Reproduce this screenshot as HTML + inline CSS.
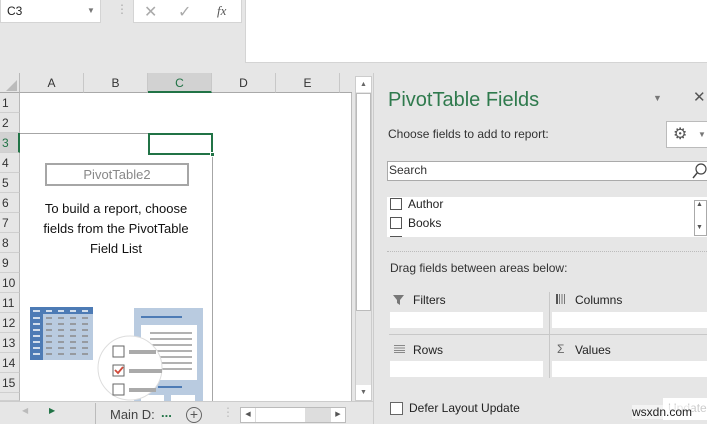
<!DOCTYPE html>
<html><head><style>
*{margin:0;padding:0;box-sizing:border-box}
body{width:707px;height:424px;overflow:hidden;background:#e6e6e6;font-family:"Liberation Sans",sans-serif;position:relative;font-size:12px;color:#222}
.a{position:absolute}
.rh{position:absolute;left:0;width:20px;height:20px;background:#e6e6e6;border-bottom:1px solid #cfcfcf;border-right:1px solid #b8b8b8;font-size:12px;text-align:left;padding-left:2px;line-height:20px;color:#333}
.ch{position:absolute;top:73px;height:20px;background:#e6e6e6;border-right:1px solid #c8c8c8;border-bottom:1px solid #a9a9a9;text-align:center;line-height:20px;font-size:12px;color:#333}
.cb{position:absolute;width:12px;height:12px;border:1px solid #555;background:#fff}
.wbox{position:absolute;background:#fff;height:16px}
</style></head><body>
<div class="a" style="left:0;top:0;width:101px;height:23px;background:#fff;border:1px solid #d4d4d4;border-top:none"></div>
<div class="a" style="left:7px;top:4px;font-size:12px">C3</div>
<div class="a" style="left:87px;top:6px;font-size:8px;color:#777">▼</div>
<div class="a" style="left:116px;top:2px;color:#aaa;font-size:12px">⋮</div>
<div class="a" style="left:133px;top:0;width:109px;height:23px;background:#fff;border:1px solid #d4d4d4;border-top:none"></div>
<div class="a" style="left:144px;top:2px;color:#aaa;font-size:16px">✕</div>
<div class="a" style="left:178px;top:2px;color:#aaa;font-size:16px">✓</div>
<div class="a" style="left:217px;top:3px;color:#555;font-size:13px;font-style:italic;font-family:'Liberation Serif',serif">fx</div>
<div class="a" style="left:245px;top:0;width:462px;height:63px;background:#fff;border-left:1px solid #d4d4d4;border-bottom:1px solid #d4d4d4"></div>
<div class="a" style="left:0;top:73px;width:20px;height:20px;background:#e6e6e6;border-right:1px solid #b8b8b8;border-bottom:1px solid #a9a9a9"></div>
<div class="a" style="left:6px;top:80px;width:0;height:0;border-left:11px solid transparent;border-bottom:11px solid #bbb"></div>
<div class="ch" style="left:20px;width:64px">A</div>
<div class="ch" style="left:84px;width:64px">B</div>
<div class="ch" style="left:148px;width:64px;background:#d2d2d2;border-bottom:2px solid #217346;color:#217346">C</div>
<div class="ch" style="left:212px;width:64px">D</div>
<div class="ch" style="left:276px;width:64px">E</div>
<div class="ch" style="left:340px;width:12px;border-right:none"></div>
<div class="a" style="left:20px;top:93px;width:332px;height:308px;background:#fff;border-right:1px solid #bbb"></div>
<div class="rh" style="top:93px">1</div>
<div class="rh" style="top:113px">2</div>
<div class="rh" style="top:133px;background:#d2d2d2;border-right:2px solid #217346;color:#217346">3</div>
<div class="rh" style="top:153px">4</div>
<div class="rh" style="top:173px">5</div>
<div class="rh" style="top:193px">6</div>
<div class="rh" style="top:213px">7</div>
<div class="rh" style="top:233px">8</div>
<div class="rh" style="top:253px">9</div>
<div class="rh" style="top:273px">10</div>
<div class="rh" style="top:293px">11</div>
<div class="rh" style="top:313px">12</div>
<div class="rh" style="top:333px">13</div>
<div class="rh" style="top:353px">14</div>
<div class="rh" style="top:373px">15</div>
<div class="rh" style="top:393px;height:8px"></div>
<div class="a" style="left:20px;top:133px;width:193px;height:270px;border:1px solid #a6a6a6;border-left:none"></div>
<div class="a" style="left:148px;top:133px;width:65px;height:22px;border:2px solid #217346"></div>
<div class="a" style="left:210px;top:152px;width:5px;height:5px;background:#217346;border:1px solid #fff"></div>
<div class="a" style="left:45px;top:163px;width:144px;height:23px;border:2px solid #a6a6a6;text-align:center;line-height:19px;color:#888;font-size:13px">PivotTable2</div>
<div class="a" style="left:32px;top:199px;width:168px;text-align:center;font-size:13px;line-height:20px;color:#111">To build a report, choose fields from the PivotTable Field List</div>
<svg class="a" style="left:28px;top:305px" width="180" height="96">
<rect x="2" y="2" width="63" height="53" fill="#b9cbe0"/>
<rect x="2" y="2" width="13" height="53" fill="#4d7bb5"/>
<rect x="2" y="2" width="63" height="7" fill="#4d7bb5"/>
<g stroke="#fff" stroke-width="1.5"><line x1="5" y1="6" x2="12" y2="6"/><line x1="18" y1="6" x2="24" y2="6"/><line x1="30" y1="6" x2="36" y2="6"/><line x1="42" y1="6" x2="48" y2="6"/><line x1="54" y1="6" x2="60" y2="6"/>
<line x1="5" y1="13" x2="12" y2="13"/><line x1="5" y1="19" x2="12" y2="19"/><line x1="5" y1="25" x2="12" y2="25"/><line x1="5" y1="31" x2="12" y2="31"/><line x1="5" y1="37" x2="12" y2="37"/><line x1="5" y1="43" x2="12" y2="43"/><line x1="5" y1="49" x2="12" y2="49"/></g>
<g stroke="#8a8a8a" stroke-width="1.5" stroke-dasharray="6 6"><line x1="18" y1="13" x2="64" y2="13"/><line x1="18" y1="19" x2="64" y2="19"/><line x1="18" y1="25" x2="64" y2="25"/><line x1="18" y1="31" x2="64" y2="31"/><line x1="18" y1="37" x2="64" y2="37"/><line x1="18" y1="43" x2="64" y2="43"/><line x1="18" y1="49" x2="64" y2="49"/></g>
<rect x="106" y="3" width="69" height="93" fill="#b9cbe0"/>
<line x1="113" y1="12" x2="154" y2="12" stroke="#4d7bb5" stroke-width="2"/>
<rect x="113" y="20" width="56" height="55" fill="#fff"/>
<g stroke="#999" stroke-width="1.5"><line x1="122" y1="28" x2="164" y2="28"/><line x1="122" y1="34" x2="164" y2="34"/><line x1="122" y1="40" x2="164" y2="40"/><line x1="122" y1="46" x2="164" y2="46"/><line x1="122" y1="52" x2="164" y2="52"/><line x1="122" y1="58" x2="164" y2="58"/><line x1="122" y1="64" x2="164" y2="64"/></g>
<line x1="130" y1="82" x2="154" y2="82" stroke="#4d7bb5" stroke-width="2"/>
<rect x="113" y="90" width="23" height="6" fill="#fff"/><rect x="143" y="90" width="24" height="6" fill="#fff"/>
<circle cx="102" cy="63" r="32" fill="#fff" stroke="#ddd"/>
<rect x="85" y="41" width="11" height="11" fill="#fff" stroke="#666"/>
<rect x="85" y="60" width="11" height="11" fill="#fff" stroke="#666"/>
<rect x="85" y="79" width="11" height="11" fill="#fff" stroke="#666"/>
<path d="M87 65 l3 3 l5 -6" stroke="#d04a3a" stroke-width="1.8" fill="none"/>
<g stroke="#aaa" stroke-width="4"><line x1="101" y1="47" x2="128" y2="47"/><line x1="101" y1="66" x2="134" y2="66"/><line x1="101" y1="85" x2="128" y2="85"/></g>
</svg>
<div class="a" style="left:355px;top:76px;width:17px;height:325px;background:#e6e6e6;border:1px solid #ccc"></div>
<div class="a" style="left:356px;top:77px;width:15px;height:15px;background:#fff;font-size:7px;color:#666;text-align:center;line-height:15px">▲</div>
<div class="a" style="left:356px;top:93px;width:15px;height:218px;background:#fff;border:1px solid #bbb"></div>
<div class="a" style="left:356px;top:385px;width:15px;height:15px;background:#fff;font-size:7px;color:#666;text-align:center;line-height:15px">▼</div>
<div class="a" style="left:0;top:401px;width:373px;height:23px;background:#e6e6e6;border-top:1px solid #ccc"></div>
<div class="a" style="left:22px;top:406px;font-size:8px;color:#bbb">◀</div>
<div class="a" style="left:49px;top:406px;font-size:8px;color:#217346">▶</div>
<div class="a" style="left:95px;top:403px;width:1px;height:21px;background:#bbb"></div>
<div class="a" style="left:110px;top:407px;font-size:13px;color:#444">Main D:</div>
<div class="a" style="left:161px;top:405px;font-size:13px;color:#217346;font-weight:bold">...</div>
<div class="a" style="left:186px;top:407px;width:16px;height:16px;border:1px solid #666;border-radius:50%;text-align:center;line-height:13px;font-size:14px;color:#555">+</div>
<div class="a" style="left:222px;top:405px;color:#bbb;font-size:12px">⋮</div>
<div class="a" style="left:240px;top:407px;width:106px;height:16px;background:#ddd;border:1px solid #bbb"></div>
<div class="a" style="left:241px;top:408px;width:14px;height:14px;background:#fff;font-size:7px;line-height:14px;text-align:center;color:#555">◀</div>
<div class="a" style="left:256px;top:408px;width:49px;height:14px;background:#fff"></div>
<div class="a" style="left:331px;top:408px;width:14px;height:14px;background:#fff;font-size:7px;line-height:14px;text-align:center;color:#555">▶</div>
<div class="a" style="left:373px;top:73px;width:334px;height:351px;background:#e6e6e6;border-left:1px solid #ccc"></div>
<div class="a" style="left:388px;top:89px;font-size:20px;color:#2f7a4d">PivotTable Fields</div>
<div class="a" style="left:653px;top:93px;font-size:9px;color:#777">▼</div>
<div class="a" style="left:693px;top:88px;font-size:15px;color:#555">✕</div>
<div class="a" style="left:388px;top:127px;font-size:12px;color:#333">Choose fields to add to report:</div>
<div class="a" style="left:666px;top:121px;width:45px;height:27px;background:#fff;border:1px solid #bbb"></div>
<div class="a" style="left:673px;top:124px;font-size:16px;color:#555">⚙</div>
<div class="a" style="left:698px;top:130px;font-size:8px;color:#777">▼</div>
<div class="a" style="left:387px;top:161px;width:330px;height:20px;background:#fff;border:1px solid #aaa"></div>
<div class="a" style="left:389px;top:163px;font-size:12px;color:#333">Search</div>
<svg class="a" style="left:692px;top:162px" width="15" height="18"><circle cx="9" cy="7" r="5" fill="none" stroke="#444" stroke-width="1.2"/><line x1="5.5" y1="10.5" x2="1" y2="16" stroke="#444" stroke-width="1.4"/></svg>
<div class="a" style="left:387px;top:197px;width:320px;height:40px;background:#fff;overflow:hidden"></div>
<div class="cb" style="left:390px;top:198px"></div><div class="a" style="left:408px;top:197px;font-size:12px">Author</div>
<div class="cb" style="left:390px;top:217px"></div><div class="a" style="left:408px;top:216px;font-size:12px">Books</div>
<div class="cb" style="left:390px;top:236px;height:1px;border-bottom:none"></div>
<div class="a" style="left:694px;top:200px;width:13px;height:36px;border:1px solid #aaa;background:#fff"></div>
<div class="a" style="left:696px;top:201px;font-size:7px;color:#555">▲</div>
<div class="a" style="left:696px;top:224px;font-size:7px;color:#555">▼</div>
<div class="a" style="left:387px;top:251px;width:320px;border-top:1px dotted #bbb"></div>
<div class="a" style="left:390px;top:261px;font-size:12px;color:#333">Drag fields between areas below:</div>
<div class="a" style="left:549px;top:292px;width:1px;height:86px;background:#c8c8c8"></div>
<div class="a" style="left:389px;top:334px;width:318px;height:1px;background:#c8c8c8"></div>
<svg class="a" style="left:393px;top:295px" width="12" height="10"><path d="M0 0 H11 L7 5 V10 L4 8 V5 Z" fill="#777"/></svg>
<div class="a" style="left:413px;top:293px;font-size:12px">Filters</div>
<svg class="a" style="left:556px;top:294px" width="10" height="10"><g stroke="#777" stroke-width="1"><line x1="1" y1="0" x2="1" y2="10"/><line x1="3.5" y1="0" x2="3.5" y2="10"/><line x1="6" y1="0" x2="6" y2="10"/><line x1="8.5" y1="0" x2="8.5" y2="10"/></g><line x1="1" y1="0" x2="1" y2="10" stroke="#555" stroke-width="2"/></svg>
<div class="a" style="left:575px;top:293px;font-size:12px">Columns</div>
<svg class="a" style="left:394px;top:345px" width="11" height="8"><g stroke="#888" stroke-width="1"><line x1="0" y1="0.5" x2="11" y2="0.5"/><line x1="0" y1="3" x2="11" y2="3"/><line x1="0" y1="5.5" x2="11" y2="5.5"/><line x1="0" y1="7.5" x2="11" y2="7.5"/></g></svg>
<div class="a" style="left:413px;top:343px;font-size:12px">Rows</div>
<div class="a" style="left:557px;top:342px;font-size:12px;color:#666">Σ</div>
<div class="a" style="left:575px;top:343px;font-size:12px">Values</div>
<div class="wbox" style="left:390px;top:312px;width:153px"></div>
<div class="wbox" style="left:552px;top:312px;width:155px"></div>
<div class="wbox" style="left:390px;top:361px;width:153px"></div>
<div class="wbox" style="left:552px;top:361px;width:155px"></div>
<div class="cb" style="left:390px;top:402px;width:13px;height:13px;border-color:#666"></div>
<div class="a" style="left:409px;top:401px;font-size:12px">Defer Layout Update</div>
<div class="a" style="left:663px;top:398px;width:44px;height:22px;background:#fff;color:#ccc;font-size:12px;padding:3px 0 0 5px">Update</div>
<div class="a" style="left:632px;top:405px;font-size:12px;color:#222;background:rgba(255,255,255,.5)">wsxdn.com</div>
</body></html>
